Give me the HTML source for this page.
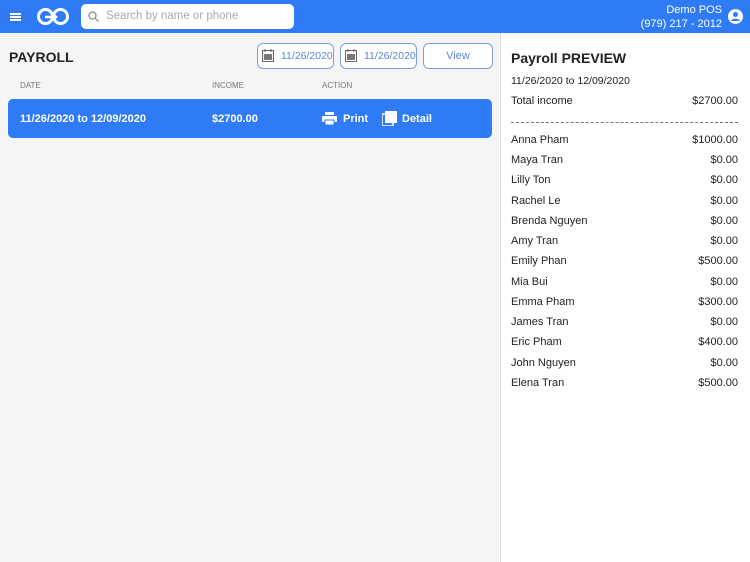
<!DOCTYPE html>
<html><head><style>
*{margin:0;padding:0;box-sizing:border-box}
body{width:750px;height:562px;overflow:hidden;font-family:"Liberation Sans",sans-serif;background:#f5f5f5;position:relative;color:#222}
.hdr{position:absolute;left:0;top:0;width:750px;height:33px;background:#2f7bf6}
.ab{position:absolute}
.search{left:81px;top:4px;width:213px;height:25px;background:#fff;border-radius:5px;color:#aaa;font-size:11.5px;padding:6px 0 0 25px}
.right{position:absolute;left:500px;top:33px;width:250px;height:529px;background:#fff;border-left:1px solid #e0e0e0}
.btn{position:absolute;top:43px;height:26px;border:1.5px solid #7c9fdc;border-radius:6px;background:#fff;color:#5b86d6;font-size:10.5px;padding-top:6px;white-space:nowrap}
.row{position:absolute;left:511px;width:227px;font-size:11px;color:#222}
.row span{float:right}
</style></head><body>
<div class="hdr"></div>
<div class="ab" style="left:10px;top:13px;width:11px;height:1.5px;background:#fff;box-shadow:0 3px 0 #fff,0 6px 0 #fff"></div>
<svg class="ab" style="left:36px;top:7px" width="34" height="19" viewBox="0 0 34 19"><circle cx="9.5" cy="9.5" r="7" fill="none" stroke="#fff" stroke-width="3"/><circle cx="24.5" cy="9.5" r="7" fill="none" stroke="#fff" stroke-width="3"/><path d="M9 10h11M17 7l3 3-3 3" stroke="#fff" stroke-width="2.5" fill="none"/></svg>
<div class="ab search">Search by name or phone</div>
<svg class="ab" style="left:88px;top:11px" width="11" height="11"><circle cx="4.5" cy="4.5" r="3.5" fill="none" stroke="#999" stroke-width="1.5"/><path d="M7 7l3.5 3.5" stroke="#999" stroke-width="1.5"/></svg>
<div class="ab" style="right:28px;top:3px;color:#fff;font-size:11px;text-align:right;line-height:14px">Demo POS<br>(979) 217 - 2012</div>
<svg class="ab" style="left:728px;top:9px" width="15" height="15" viewBox="0 0 15 15"><circle cx="7.5" cy="7.5" r="7.5" fill="#fff"/><circle cx="7.5" cy="5.5" r="2.5" fill="#2f7bf6"/><path d="M3 12c1-3 8-3 9 0" fill="#2f7bf6"/></svg>
<div class="ab" style="left:9px;top:49px;font-size:14px;font-weight:bold">PAYROLL</div>
<div class="btn" style="left:257px;width:77px;padding-left:23px">11/26/2020</div>
<div class="btn" style="left:340px;width:77px;padding-left:23px">11/26/2020</div>
<div class="btn" style="left:423px;width:70px;text-align:center;font-size:11px">View</div>
<svg class="ab" style="left:262px;top:49px" width="12" height="13"><rect x="0.5" y="1.5" width="11" height="11" fill="none" stroke="#666"/><rect x="2" y="5" width="8" height="6" fill="#777"/><path d="M3 0v3M9 0v3" stroke="#666"/></svg>
<svg class="ab" style="left:345px;top:49px" width="12" height="13"><rect x="0.5" y="1.5" width="11" height="11" fill="none" stroke="#666"/><rect x="2" y="5" width="8" height="6" fill="#777"/><path d="M3 0v3M9 0v3" stroke="#666"/></svg>
<div class="ab" style="left:20px;top:81px;font-size:8px;color:#777">DATE</div>
<div class="ab" style="left:212px;top:81px;font-size:8px;color:#777">INCOME</div>
<div class="ab" style="left:322px;top:81px;font-size:8px;color:#777">ACTION</div>
<div class="ab" style="left:8px;top:99px;width:484px;height:39px;background:#2f7bf6;border-radius:5px"></div>
<div class="ab" style="left:20px;top:113px;font-size:11px;font-weight:bold;color:#fff">11/26/2020 to 12/09/2020</div>
<div class="ab" style="left:212px;top:113px;font-size:11px;font-weight:bold;color:#fff">$2700.00</div>
<svg class="ab" style="left:322px;top:112px" width="15" height="13"><rect x="3" y="0" width="9" height="3" fill="#fff"/><rect x="0" y="4" width="15" height="6" rx="1" fill="#fff"/><rect x="3" y="8" width="9" height="5" fill="#fff" stroke="#2f7bf6"/></svg>
<div class="ab" style="left:343px;top:113px;font-size:11px;font-weight:bold;color:#fff">Print</div>
<svg class="ab" style="left:382px;top:111px" width="15" height="15"><rect x="0" y="3" width="11" height="12" fill="none" stroke="#fff" stroke-width="1.5"/><rect x="3" y="0" width="12" height="12" fill="#fff"/></svg>
<div class="ab" style="left:402px;top:113px;font-size:11px;font-weight:bold;color:#fff">Detail</div>
<div class="right"></div>
<div class="ab" style="left:511px;top:50px;font-size:14px;font-weight:bold">Payroll PREVIEW</div>
<div class="ab" style="left:511px;top:75px;font-size:10.5px">11/26/2020 to 12/09/2020</div>
<div class="row" style="top:95px">Total income<span>$2700.00</span></div>
<div class="ab" style="left:511px;top:122px;width:227px;border-top:1px dashed #777"></div>
<div class="row" style="top:134px">Anna Pham<span>$1000.00</span></div>
<div class="row" style="top:154px">Maya Tran<span>$0.00</span></div>
<div class="row" style="top:174px">Lilly Ton<span>$0.00</span></div>
<div class="row" style="top:195px">Rachel Le<span>$0.00</span></div>
<div class="row" style="top:215px">Brenda Nguyen<span>$0.00</span></div>
<div class="row" style="top:235px">Amy Tran<span>$0.00</span></div>
<div class="row" style="top:255px">Emily Phan<span>$500.00</span></div>
<div class="row" style="top:276px">Mia Bui<span>$0.00</span></div>
<div class="row" style="top:296px">Emma Pham<span>$300.00</span></div>
<div class="row" style="top:316px">James Tran<span>$0.00</span></div>
<div class="row" style="top:336px">Eric Pham<span>$400.00</span></div>
<div class="row" style="top:357px">John Nguyen<span>$0.00</span></div>
<div class="row" style="top:377px">Elena Tran<span>$500.00</span></div>
</body></html>
